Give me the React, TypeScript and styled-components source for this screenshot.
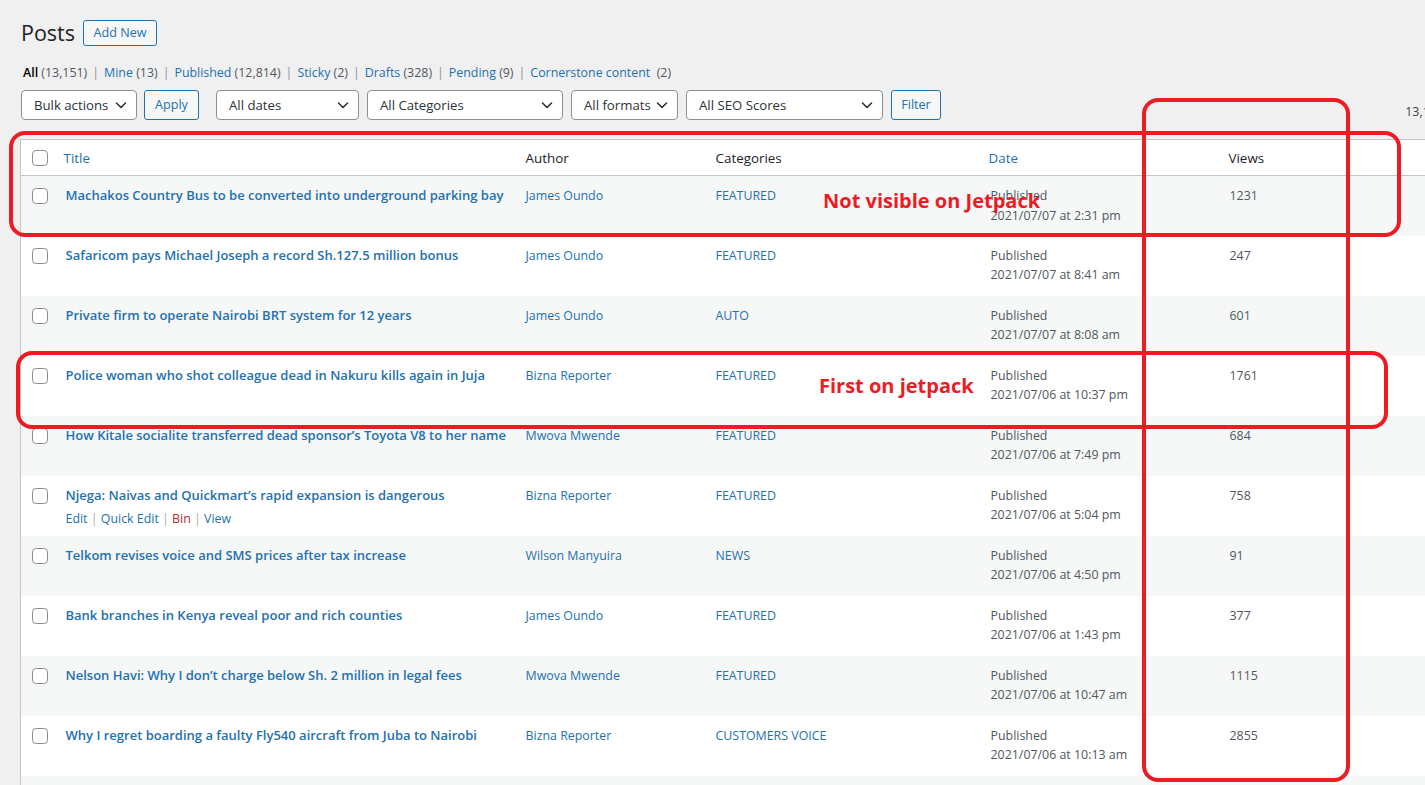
import styled, { createGlobalStyle } from "styled-components";

const FONT = `"Segoe UI", "Open Sans", "Noto Sans", "Liberation Sans", sans-serif`;

const GlobalStyle = createGlobalStyle`
  html,
  body {
    background: #f0f0f1;
    margin: 0;
    overflow: hidden;
    padding: 0;
  }

  body {
    color: #3c434a;
    font-family: ${FONT};
    font-size: 12.4px;
  }

  * {
    box-sizing: border-box;
  }
`;

const Page = styled.div`
  height: 785px;
  overflow: hidden;
  position: relative;
  width: 1425px;
`;

const Wrap = styled.div`
  padding-left: 20px;
  width: 1485px;
`;

const Heading = styled.div`
  align-items: center;
  display: flex;
  gap: 8px;
  height: 26px;
  margin-top: 20px;
`;

const PageTitle = styled.h1`
  color: #1d2327;
  font-size: 21.5px;
  font-weight: 400;
  line-height: 1;
  margin: 0 0 0 1px;
`;

const OutlineButton = styled.button<{ $h?: number; $w: number }>`
  background: #f6f7f7;
  border: 1px solid #2271b1;
  border-radius: 3px;
  color: #2271b1;
  cursor: pointer;
  font-family: ${FONT};
  font-size: 12.6px;
  height: ${({ $h }) => $h ?? 30}px;
  line-height: 1;
  padding: 0;
  width: ${({ $w }) => $w}px;
`;

const Views = styled.ul`
  align-items: center;
  display: flex;
  height: 20px;
  list-style: none;
  margin: 16px 0 0 3px;
  padding: 0;
`;

const ViewItem = styled.li`
  color: #8c8f94;
  font-size: 12.4px;
  white-space: pre;
`;

const Separator = styled.span`
  margin: 0 5px;
`;

const ViewLink = styled.a<{ $current?: boolean }>`
  color: ${({ $current }) => ($current ? "#000" : "#2271b1")};
  font-weight: ${({ $current }) => ($current ? 600 : 400)};
  text-decoration: none;
`;

const Count = styled.span`
  color: #50575e;
  font-weight: 400;
`;

const Toolbar = styled.div`
  align-items: flex-start;
  display: flex;
  height: 30px;
  margin-top: 8px;
`;

const ToolGroup = styled.div`
  display: flex;
  gap: 7px;
  margin-left: 1px;
  margin-right: 17px;
`;

const FilterGroup = styled.div`
  display: flex;
  gap: 8px;
`;

const Select = styled.div<{ $w: number }>`
  align-items: center;
  background: #fff;
  border: 1px solid #8c8f94;
  border-radius: 4px;
  color: #2c3338;
  display: flex;
  font-size: 13.2px;
  height: 30px;
  justify-content: space-between;
  padding: 0 7px 0 12px;
  white-space: nowrap;
  width: ${({ $w }) => $w}px;
`;

const ItemsCount = styled.span`
  color: #3c434a;
  font-size: 12.4px;
  margin-left: auto;
  margin-top: 13px;
  padding-right: 6px;
`;

const Table = styled.table`
  background: #fff;
  border: 1px solid #c3c4c7;
  border-collapse: collapse;
  margin-top: 19px;
  table-layout: fixed;
  width: 1445px;
`;

const HeadCell = styled.th<{ $pad?: number }>`
  border-bottom: 1px solid #c3c4c7;
  color: #1d2327;
  font-size: 13.4px;
  font-weight: 400;
  height: 36px;
  padding: 0 10px 0 ${({ $pad }) => $pad ?? 10}px;
  text-align: left;
  vertical-align: middle;
`;

const SortLink = styled.a`
  color: #2271b1;
  text-decoration: none;
`;

const Row = styled.tr<{ $striped: boolean }>`
  background: ${({ $striped }) => ($striped ? "#f6f7f7" : "#fff")};
  height: 60px;
`;

const Cell = styled.td`
  color: #50575e;
  font-size: 12.4px;
  line-height: 19.5px;
  padding: 10px 10px 0;
  vertical-align: top;
`;

const CheckCell = styled.td`
  padding: 12px 0 0 11px;
  vertical-align: top;
`;

const Checkbox = styled.span`
  background: #fff;
  border: 1px solid #8c8f94;
  border-radius: 4px;
  display: block;
  height: 16px;
  width: 16px;
`;

const HeadCheckCell = styled.th`
  border-bottom: 1px solid #c3c4c7;
  padding: 0 0 0 11px;
  vertical-align: middle;
`;

const RowTitle = styled.a`
  color: #2271b1;
  display: block;
  font-size: 13px;
  font-weight: 600;
  line-height: 19.5px;
  text-decoration: none;
  white-space: nowrap;
`;

const RowActions = styled.div`
  color: #a7aaad;
  font-size: 12.4px;
  line-height: 19.5px;
  padding-top: 4px;
  white-space: pre;
`;

const ActionLink = styled.a<{ $danger?: boolean }>`
  color: ${({ $danger }) => ($danger ? "#b32d2e" : "#2271b1")};
  text-decoration: none;
`;

const CellLink = styled.a`
  color: #2271b1;
  text-decoration: none;
  white-space: nowrap;
`;

const DateText = styled.div`
  color: #50575e;
  white-space: nowrap;
`;

/* red annotation marks drawn over the table */
const Callout = styled.div`
  border: 4px solid #ed1c24;
  border-radius: 16px;
  pointer-events: none;
  position: absolute;
`;

const CalloutText = styled.span`
  color: #ed1c24;
  font-family: ${FONT};
  font-size: 20px;
  font-weight: 700;
  line-height: 1;
  pointer-events: none;
  position: absolute;
  white-space: nowrap;
`;

function Chevron() {
  return (
    <svg width="16" height="16" viewBox="0 0 16 16" aria-hidden="true">
      <path
        d="M3.5 6 8 10.5 12.5 6"
        fill="none"
        stroke="#2c3338"
        strokeWidth="1.6"
        strokeLinecap="round"
        strokeLinejoin="round"
      />
    </svg>
  );
}

type Post = {
  title: string;
  author: string;
  category: string;
  date: string;
  views: string;
  actions?: boolean;
};

const posts: Post[] = [
  {
    title: "Machakos Country Bus to be converted into underground parking bay",
    author: "James Oundo",
    category: "FEATURED",
    date: "2021/07/07 at 2:31 pm",
    views: "1231",
  },
  {
    title: "Safaricom pays Michael Joseph a record Sh.127.5 million bonus",
    author: "James Oundo",
    category: "FEATURED",
    date: "2021/07/07 at 8:41 am",
    views: "247",
  },
  {
    title: "Private firm to operate Nairobi BRT system for 12 years",
    author: "James Oundo",
    category: "AUTO",
    date: "2021/07/07 at 8:08 am",
    views: "601",
  },
  {
    title: "Police woman who shot colleague dead in Nakuru kills again in Juja",
    author: "Bizna Reporter",
    category: "FEATURED",
    date: "2021/07/06 at 10:37 pm",
    views: "1761",
  },
  {
    title: "How Kitale socialite transferred dead sponsor’s Toyota V8 to her name",
    author: "Mwova Mwende",
    category: "FEATURED",
    date: "2021/07/06 at 7:49 pm",
    views: "684",
  },
  {
    title: "Njega: Naivas and Quickmart’s rapid expansion is dangerous",
    author: "Bizna Reporter",
    category: "FEATURED",
    date: "2021/07/06 at 5:04 pm",
    views: "758",
    actions: true,
  },
  {
    title: "Telkom revises voice and SMS prices after tax increase",
    author: "Wilson Manyuira",
    category: "NEWS",
    date: "2021/07/06 at 4:50 pm",
    views: "91",
  },
  {
    title: "Bank branches in Kenya reveal poor and rich counties",
    author: "James Oundo",
    category: "FEATURED",
    date: "2021/07/06 at 1:43 pm",
    views: "377",
  },
  {
    title: "Nelson Havi: Why I don’t charge below Sh. 2 million in legal fees",
    author: "Mwova Mwende",
    category: "FEATURED",
    date: "2021/07/06 at 10:47 am",
    views: "1115",
  },
  {
    title: "Why I regret boarding a faulty Fly540 aircraft from Juba to Nairobi",
    author: "Bizna Reporter",
    category: "CUSTOMERS VOICE",
    date: "2021/07/06 at 10:13 am",
    views: "2855",
  },
];

const views: { label: string; count: string; current?: boolean }[] = [
  { label: "All", count: "(13,151)", current: true },
  { label: "Mine", count: "(13)" },
  { label: "Published", count: "(12,814)" },
  { label: "Sticky", count: "(2)" },
  { label: "Drafts", count: "(328)" },
  { label: "Pending", count: "(9)" },
  { label: "Cornerstone content", count: " (2)" },
];

export default function App() {
  return (
    <Page>
      <GlobalStyle />
      <Wrap>
        <Heading>
          <PageTitle>Posts</PageTitle>
          <OutlineButton $h={26} $w={74}>
            Add New
          </OutlineButton>
        </Heading>

        <Views>
          {views.map((v, i) => (
            <ViewItem key={v.label}>
              <ViewLink $current={v.current}>
                {v.label} <Count>{v.count}</Count>
              </ViewLink>
              {i < views.length - 1 && <Separator>|</Separator>}
            </ViewItem>
          ))}
        </Views>

        <Toolbar>
          <ToolGroup>
            <Select $w={116}>
              Bulk actions
              <Chevron />
            </Select>
            <OutlineButton $w={55}>Apply</OutlineButton>
          </ToolGroup>
          <FilterGroup>
            <Select $w={143}>
              All dates
              <Chevron />
            </Select>
            <Select $w={196}>
              All Categories
              <Chevron />
            </Select>
            <Select $w={107}>
              All formats
              <Chevron />
            </Select>
            <Select $w={197}>
              All SEO Scores
              <Chevron />
            </Select>
            <OutlineButton $w={50}>Filter</OutlineButton>
          </FilterGroup>
          <ItemsCount>13,151 items</ItemsCount>
        </Toolbar>

        <Table>
          <colgroup>
            <col style={{ width: 35 }} />
            <col style={{ width: 460 }} />
            <col style={{ width: 190 }} />
            <col style={{ width: 275 }} />
            <col style={{ width: 239 }} />
            <col />
          </colgroup>
          <thead>
            <tr>
              <HeadCheckCell>
                <Checkbox />
              </HeadCheckCell>
              <HeadCell $pad={8}>
                <SortLink>Title</SortLink>
              </HeadCell>
              <HeadCell>Author</HeadCell>
              <HeadCell>Categories</HeadCell>
              <HeadCell $pad={8}>
                <SortLink>Date</SortLink>
              </HeadCell>
              <HeadCell $pad={9}>Views</HeadCell>
            </tr>
          </thead>
          <tbody>
            {posts.map((p, i) => (
              <Row key={p.title} $striped={i % 2 === 0}>
                <CheckCell>
                  <Checkbox />
                </CheckCell>
                <Cell>
                  <RowTitle>{p.title}</RowTitle>
                  {p.actions && (
                    <RowActions>
                      <ActionLink>Edit</ActionLink>
                      {" | "}
                      <ActionLink>Quick Edit</ActionLink>
                      {" | "}
                      <ActionLink $danger>Bin</ActionLink>
                      {" | "}
                      <ActionLink>View</ActionLink>
                    </RowActions>
                  )}
                </Cell>
                <Cell>
                  <CellLink>{p.author}</CellLink>
                </Cell>
                <Cell>
                  <CellLink>{p.category}</CellLink>
                </Cell>
                <Cell>
                  <DateText>Published</DateText>
                  <DateText>{p.date}</DateText>
                </Cell>
                <Cell>{p.views}</Cell>
              </Row>
            ))}
            <Row $striped>
              <CheckCell>
                <Checkbox />
              </CheckCell>
              <Cell />
              <Cell />
              <Cell />
              <Cell />
              <Cell />
            </Row>
          </tbody>
        </Table>
      </Wrap>

      <Callout style={{ left: 9, top: 131, width: 1392, height: 106 }} />
      <Callout style={{ left: 1142, top: 98, width: 208, height: 684 }} />
      <Callout style={{ left: 16, top: 351, width: 1372, height: 78 }} />
      <CalloutText style={{ left: 823, top: 191 }}>Not visible on Jetpack</CalloutText>
      <CalloutText style={{ left: 819, top: 376 }}>First on jetpack</CalloutText>
    </Page>
  );
}
